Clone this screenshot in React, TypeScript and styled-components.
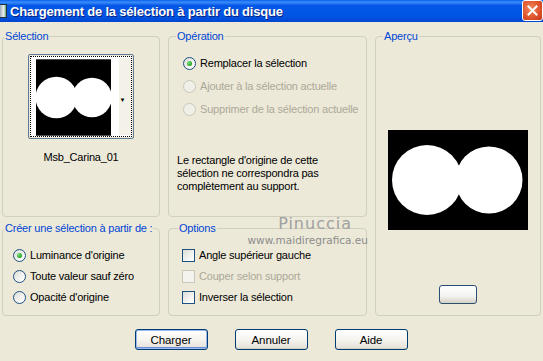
import React from "react"
import styled, { createGlobalStyle } from "styled-components"

const GlobalStyle = createGlobalStyle`
    html, body {
        margin: 0;
        padding: 0;
        background: #ECE9D8;
    }
    body {
        font-family: "Liberation Sans", Arial, sans-serif;
        font-size: 11px;
        color: #000;
    }
`

const Window = styled.div`
    width: 543px;
    height: 361px;
    background: #ECE9D8;
    display: flex;
    flex-direction: column;
    overflow: hidden;
`

const TitleBar = styled.div`
    height: 22px;
    display: flex;
    align-items: center;
    background: linear-gradient(#0A62EC 0%, #3A8CFA 10%, #0558E6 25%, #0054E3 75%, #0046D0 100%);
    color: #fff;
    font-weight: bold;
    font-size: 13px;
    letter-spacing: -0.2px;
    text-shadow: 1px 1px #0A1E7A;
`

const TitleIcon = styled.div`
    width: 6px;
    height: 12px;
    margin-right: 3px;
    background: linear-gradient(90deg, #9ab 0%, #eee 60%, #6a7 100%);
    border: 1px solid #234;
    border-left: none;
`

const TitleText = styled.div`
    flex-grow: 1;
`

const CloseButton = styled.div`
    width: 19px;
    height: 19px;
    margin: 0 0 1px 0;
    border: 1px solid #fff;
    border-radius: 3px;
    background: radial-gradient(circle at 40% 40%, #F08A60 0%, #E0562E 55%, #C2361A 100%);
    display: flex;
    align-items: center;
    justify-content: center;
`

const Body = styled.div`
    display: grid;
    grid-template-columns: 158px 199px 166px;
    grid-template-rows: 187px 94px;
    column-gap: 8px;
    row-gap: 5px;
    padding: 8px 2px 0 2px;
    grid-template-areas:
        "sel op prev"
        "make opt prev";
`

const Frame = styled.fieldset<{ $area: string }>`
    grid-area: ${p => p.$area};
    margin: 0;
    padding: 0;
    min-width: 0;
    border: 1px solid #D0D0BF;
    border-radius: 4px;
    display: flex;
    flex-direction: column;
    position: relative;
`

const Legend = styled.legend<{ $indent: number }>`
    color: #0046D5;
    font-size: 11px;
    line-height: 13px;
    padding: 0 1px;
    white-space: nowrap;
    letter-spacing: -0.2px;
    margin-left: ${p => p.$indent}px;
`

const ThumbBox = styled.div`
    align-self: center;
    margin-top: 11px;
    width: 106px;
    height: 85px;
    border: 1px solid #5E7A95;
    border-radius: 2px;
    padding: 1px;
    box-sizing: border-box;
`

const ThumbInner = styled.div`
    height: 100%;
    border: 1px dotted #000;
    box-sizing: border-box;
    display: flex;
    padding: 1px 0 1px 5px;
    background: #fff;
`

const ThumbSide = styled.div`
    width: 12px;
    display: flex;
    align-items: center;
    justify-content: flex-start;
    background: #F3F1E8;
    border-left: 8px solid #fff;
    box-sizing: content-box;
    font-size: 6px;
    padding-top: 6px;
`

const Caption = styled.div`
    text-align: center;
    font-size: 11px;
    letter-spacing: -0.2px;
    margin-top: 12px;
`

const OptionList = styled.div<{ $left: number; $top: number; $gap: number }>`
    display: flex;
    flex-direction: column;
    gap: ${p => p.$gap}px;
    padding-left: ${p => p.$left}px;
    margin-top: ${p => p.$top}px;
`

const OptionRow = styled.label<{ $disabled?: boolean }>`
    display: flex;
    align-items: center;
    gap: 4px;
    height: 14px;
    font-size: 11px;
    letter-spacing: -0.2px;
    white-space: nowrap;
    color: ${p => (p.$disabled ? "#ACA899" : "#000")};
`

const Radio = styled.span<{ $checked?: boolean; $disabled?: boolean }>`
    width: 13px;
    height: 13px;
    flex-shrink: 0;
    box-sizing: border-box;
    border-radius: 50%;
    border: 1px solid ${p => (p.$disabled ? "#CAC8BB" : "#1C5180")};
    background: ${p => (p.$disabled ? "#F0EFE8" : "linear-gradient(135deg, #DCDCD7 0%, #fff 90%)")};
    display: flex;
    align-items: center;
    justify-content: center;
    &::after {
        content: "";
        width: 5px;
        height: 5px;
        border-radius: 50%;
        background: radial-gradient(circle at 35% 35%, #7EE07E 0%, #21A121 70%);
        display: ${p => (p.$checked ? "block" : "none")};
    }
`

const Check = styled.span<{ $disabled?: boolean }>`
    width: 13px;
    height: 13px;
    flex-shrink: 0;
    box-sizing: border-box;
    border: 1px solid ${p => (p.$disabled ? "#CAC8BB" : "#1C5180")};
    background: ${p => (p.$disabled ? "#F4F3EE" : "linear-gradient(135deg, #DCDCD7 0%, #fff 90%)")};
`

const Note = styled.p`
    margin: 38px 0 0 8px;
    font-size: 11px;
    letter-spacing: -0.2px;
    line-height: 13px;
    width: 170px;
`

const PreviewImage = styled.div`
    align-self: center;
    margin-top: 87px;
    width: 140px;
    height: 100px;
    background: #000;
    display: flex;
    align-items: center;
    justify-content: center;
`

const SmallButton = styled.button`
    align-self: center;
    margin-top: 55px;
    width: 38px;
    height: 19px;
    border: 1px solid #2C4E73;
    border-radius: 3px;
    background: linear-gradient(#fff 0%, #F3F3EF 60%, #D6D0C5 100%);
    padding: 0;
`

const Watermark = styled.div`
    position: absolute;
    right: -2px;
    top: -19px;
    text-align: right;
    color: #9A9A9A;
    font-family: "DejaVu Sans", sans-serif;
    pointer-events: none;
`

const WatermarkName = styled.div`
    font-size: 16px;
    line-height: 16px;
    letter-spacing: 1px;
    padding-right: 16px;
    color: #A0A0A0;
`

const WatermarkUrl = styled.div`
    font-size: 10.5px;
    line-height: 12px;
    margin-top: 2px;
    color: #8C8C8C;
`

const ButtonBar = styled.div`
    display: flex;
    justify-content: center;
    gap: 27px;
    margin-top: 13px;
    padding-right: 1px;
`

const DialogButton = styled.button<{ $default?: boolean }>`
    width: 73px;
    height: 21px;
    border: 1px solid #003C74;
    border-radius: 3px;
    background: linear-gradient(#fff 0%, #F5F4EF 50%, #E3E0D6 100%);
    font-family: "Liberation Sans", Arial, sans-serif;
    font-size: 11.5px;
    letter-spacing: -0.1px;
    color: #000;
    padding: 0;
    box-shadow: ${p => (p.$default ? "inset 0 0 0 1px #9DB9EB, inset 0 -1px 0 1px #6A8FD8" : "inset 0 -1px 0 #D6D0C5")};
`

function Circles({ w, h, r1, r2, c1, c2 }: { w: number; h: number; r1: number; r2: number; c1: number; c2: number }) {
    return (
        <svg width={w} height={h} viewBox={`0 0 ${w} ${h}`}>
            <rect width={w} height={h} fill="#000" />
            <circle cx={c1} cy={h / 2} r={r1} fill="#fff" />
            <circle cx={c2} cy={h / 2} r={r2} fill="#fff" />
        </svg>
    )
}

class App extends React.Component {
    render() {
        return <Window>
            <GlobalStyle />
            <TitleBar>
                <TitleIcon />
                <TitleText>Chargement de la sélection à partir du disque</TitleText>
                <CloseButton>
                    <svg width="11" height="11" viewBox="0 0 11 11">
                        <path d="M1.5 1.5 L9.5 9.5 M9.5 1.5 L1.5 9.5" stroke="#fff" strokeWidth="2" strokeLinecap="square" />
                    </svg>
                </CloseButton>
            </TitleBar>

            <Body>
                <Frame $area="sel">
                    <Legend $indent={1}>Sélection</Legend>
                    <ThumbBox>
                        <ThumbInner>
                            <Circles w={78} h={79} r1={21.5} r2={20.5} c1={21} c2={58} />
                            <ThumbSide>▼</ThumbSide>
                        </ThumbInner>
                    </ThumbBox>
                    <Caption>Msb_Carina_01</Caption>
                </Frame>

                <Frame $area="op">
                    <Legend $indent={7}>Opération</Legend>
                    <OptionList $left={14} $top={13} $gap={9}>
                        <OptionRow><Radio $checked />Remplacer la sélection</OptionRow>
                        <OptionRow $disabled><Radio $disabled />Ajouter à la sélection actuelle</OptionRow>
                        <OptionRow $disabled><Radio $disabled />Supprimer de la sélection actuelle</OptionRow>
                    </OptionList>
                    <Note>
                        Le rectangle d'origine de cette sélection ne correspondra pas complètement au support.
                    </Note>
                </Frame>

                <Frame $area="prev">
                    <Legend $indent={7}>Aperçu</Legend>
                    <PreviewImage>
                        <Circles w={140} h={100} r1={35} r2={33.5} c1={39} c2={101} />
                    </PreviewImage>
                    <SmallButton />
                </Frame>

                <Frame $area="make">
                    <Legend $indent={1}>Créer une sélection à partir de :</Legend>
                    <OptionList $left={10} $top={13} $gap={7}>
                        <OptionRow><Radio $checked />Luminance d'origine</OptionRow>
                        <OptionRow><Radio />Toute valeur sauf zéro</OptionRow>
                        <OptionRow><Radio />Opacité d'origine</OptionRow>
                    </OptionList>
                </Frame>

                <Frame $area="opt">
                    <Legend $indent={9}>Options</Legend>
                    <Watermark>
                        <WatermarkName>Pinuccia</WatermarkName>
                        <WatermarkUrl>www.maidiregrafica.eu</WatermarkUrl>
                    </Watermark>
                    <OptionList $left={13} $top={13} $gap={7}>
                        <OptionRow><Check />Angle supérieur gauche</OptionRow>
                        <OptionRow $disabled><Check $disabled />Couper selon support</OptionRow>
                        <OptionRow><Check />Inverser la sélection</OptionRow>
                    </OptionList>
                </Frame>
            </Body>

            <ButtonBar>
                <DialogButton $default>Charger</DialogButton>
                <DialogButton>Annuler</DialogButton>
                <DialogButton>Aide</DialogButton>
            </ButtonBar>
        </Window>
    }
}

export default App
